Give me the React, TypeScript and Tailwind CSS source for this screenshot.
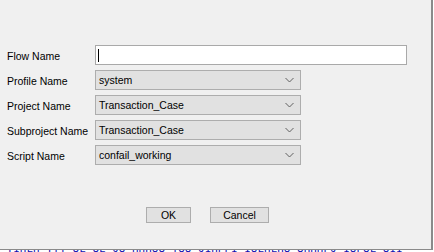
import React from 'react';

const font = { fontFamily: '"Liberation Sans", Arial, sans-serif' };

const Chevron: React.FC = () => (
  <svg width="9" height="6" viewBox="0 0 9 6" className="shrink-0">
    <path d="M0.5 1 L4.5 5 L8.5 1" fill="none" stroke="#606060" strokeWidth="1" />
  </svg>
);

const Select: React.FC<{ value: string }> = ({ value }) => (
  <div className="flex items-center justify-between w-[206px] h-[20px] bg-[#e1e1e1] border border-[#adadad] pl-[3px] pr-[6px]">
    <span className="text-[10.5px] text-black leading-none">{value}</span>
    <Chevron />
  </div>
);

const rows = [
  { label: 'Profile Name', value: 'system' },
  { label: 'Project Name', value: 'Transaction_Case' },
  { label: 'Subproject Name', value: 'Transaction_Case' },
  { label: 'Script Name', value: 'confail_working' },
];

const App: React.FC = () => {
  return (
    <div className="w-[434px] h-[252px] bg-white overflow-hidden" style={font}>
      <div className="w-[433px] h-[250px] bg-[#f0f0f0] border-r-2 border-b border-[#8a8a8a] flex flex-col pt-[45px]">
        <div className="flex flex-col gap-[5px]">
          <div className="flex items-center h-[20px]">
            <span className="w-[95px] pl-[7px] pt-[4px] text-[10.5px] text-black">Flow Name</span>
            <div className="w-[312px] h-[20px] bg-white border border-[#a9a9a9] flex items-center pl-[2px]">
              <div className="w-px h-[13px] bg-black" />
            </div>
          </div>
          {rows.map((r) => (
            <div key={r.label} className="flex items-center h-[20px]">
              <span className="w-[95px] pl-[7px] pt-[4px] text-[10.5px] text-black whitespace-nowrap">{r.label}</span>
              <Select value={r.value} />
            </div>
          ))}
        </div>
        <div className="flex pl-[146px] gap-[19px] mt-[42px]">
          <button className="w-[45px] h-[16px] bg-[#e1e1e1] border border-[#adadad] text-[10.5px] text-black leading-none">OK</button>
          <button className="w-[59px] h-[16px] bg-[#e1e1e1] border border-[#adadad] text-[10.5px] text-black leading-none">Cancel</button>
        </div>
      </div>
      <div className="h-[2px] overflow-hidden">
        <div className="text-[11px] leading-[11px] text-[#1010b0] whitespace-nowrap -mt-[6px]" style={{ fontFamily: '"Liberation Mono", monospace' }}>
          =TIHLH TTT UL UL JU HHHUU TUU JIHFFI IULHLHU UHHHFJ IUFUL UII
        </div>
      </div>
    </div>
  );
};

export default App;
